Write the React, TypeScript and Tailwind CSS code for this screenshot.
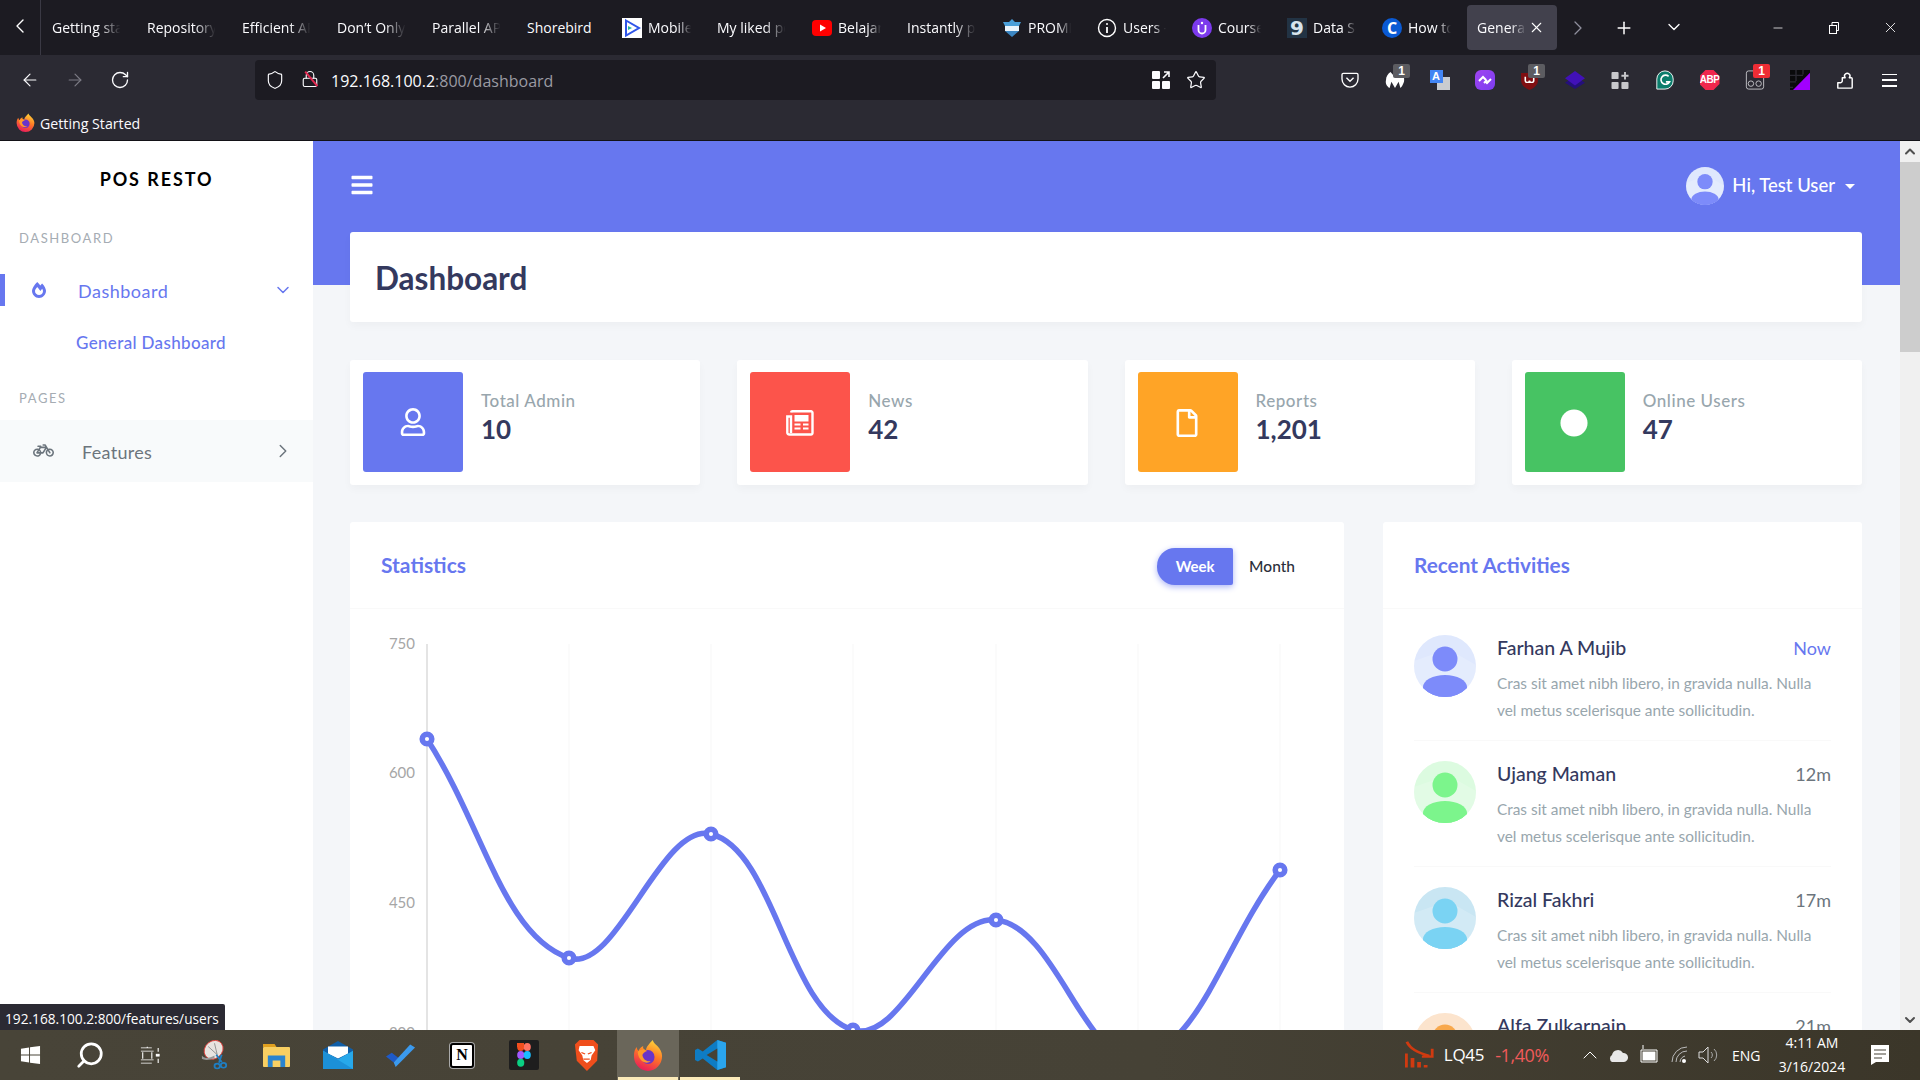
import React from "react";
import { ArrowLeft, ArrowRight, RotateCw, Shield, Lock, Star, ChevronLeft, ChevronRight, ChevronDown, ChevronUp, Plus, X, Minus, Search } from "lucide-react";
import { FaBars, FaBicycle, FaCircle, FaFireAlt, FaRegFile, FaRegUser } from "react-icons/fa";

const P = "#6777ef";

function Fade({ children, className = "", full }: { children: React.ReactNode; className?: string; full?: boolean }) {
  return <span className={"block overflow-hidden whitespace-nowrap " + (full ? "" : "[mask-image:linear-gradient(to_right,#000_68%,transparent_98%)] ") + className}>{children}</span>;
}

function Fav({ kind }: { kind: string }) {
  if (kind === "mobile")
    return <svg width="20" height="20" viewBox="0 0 20 20" className="shrink-0"><rect width="20" height="20" fill="#fff" /><path d="M4 2.500 17 10 4 17.500Z" fill="none" stroke="#2f55e8" strokeWidth="2" /><path d="M6 8l4 2-4 2Z" fill="#22b8a0" /></svg>;
  if (kind === "yt")
    return <svg width="20" height="20" viewBox="0 0 20 20" className="shrink-0"><rect y="2" width="20" height="16" rx="4" fill="#f00" /><path d="M8 6.500 14 10l-6 3.500Z" fill="#fff" /></svg>;
  if (kind === "prom")
    return <svg width="20" height="20" viewBox="0 0 20 20" className="shrink-0"><path d="M10 1l3 3h6l-2 4H3L1 4h6Z" fill="#4a9fd8" /><rect x="3" y="8" width="14" height="5" fill="#eaf4fb" /><path d="M3 13h14l-7 6Z" fill="#3b86c2" /></svg>;
  if (kind === "users")
    return <svg width="20" height="20" viewBox="0 0 20 20" fill="none" stroke="#fff" className="shrink-0"><circle cx="10" cy="10" r="8.500" strokeWidth="1.400" /><path d="M10 9v6" strokeWidth="1.800" /><circle cx="10" cy="6" r="1" fill="#fff" stroke="none" /></svg>;
  if (kind === "course")
    return <svg width="20" height="20" viewBox="0 0 20 20" className="shrink-0"><circle cx="10" cy="10" r="10" fill="#7c3aed" /><path d="M6.500 7v5a3.500 3.500 0 0 0 7 0V7" fill="none" stroke="#fff" strokeWidth="1.800" /><circle cx="10" cy="5" r="1.200" fill="#fff" /></svg>;
  if (kind === "data")
    return <span className="w-5 h-5 shrink-0 bg-[#223344] text-[#d8e4ec] text-[20px] leading-5 font-bold text-center font-['DejaVu_Sans',sans-serif]">9</span>;
  if (kind === "how")
    return <span className="w-5 h-5 shrink-0 rounded-full bg-[#0a5ad4] text-white text-[16px] leading-5 font-bold text-center">C</span>;
  return null;
}

function Tab({ title, fav, full }: { title: string; fav?: string; full?: boolean }) {
  return (
    <div className="w-[95px] shrink-0 h-[45px] flex items-center pl-[10px] pr-[15px] gap-[6px]">
      {fav && <Fav kind={fav} />}
      <Fade full={full} className="flex-1 text-[14px] text-[#fbfbfe]">{title}</Fade>
    </div>
  );
}

function TabBar() {
  const tabs: [string, string?][] = [
    ["Getting started"], ["Repository search"], ["Efficient API"], ["Don’t Only Use"], ["Parallel APIs"], ["Shorebird"],
    ["Mobile App", "mobile"], ["My liked posts"], ["Belajar", "yt"], ["Instantly preview"], ["PROMPT", "prom"], ["Users - list", "users"],
    ["Course list", "course"], ["Data Science", "data"], ["How to use", "how"],
  ];
  return (
    <div className="h-[55px] shrink-0 bg-[#1c1b22] flex items-start text-white">
      <div className="w-[41px] h-[55px] border-r border-[#3a3944] flex items-center justify-center shrink-0">
        <ChevronLeft size={24} strokeWidth={1.4} className="mb-[4px]" />
      </div>
      <div className="flex pt-[5px] ml-px">
        {tabs.map(([t, f]) => <Tab key={t} title={t} fav={f} full={t === "Shorebird"} />)}
        <div className="w-[90px] h-[45px] rounded-[4px] bg-[#42414d] flex items-center pl-[10px] shrink-0">
          <Fade className="w-[50px] text-[14px] text-[#fbfbfe]">General Dashboard</Fade>
          <X size={17} strokeWidth={1.5} className="ml-[1px]" />
        </div>
      </div>
      <div className="flex items-center h-[45px] mt-[5px]">
        <ChevronRight size={24} strokeWidth={1.3} className="ml-[9px] text-[#8f8f9d]" />
        <Plus size={20} strokeWidth={1.8} className="ml-[24px]" />
        <ChevronDown size={20} strokeWidth={1.6} className="ml-[30px] mb-[2px]" />
        <Minus size={14} strokeWidth={1.3} className="ml-[87px]" />
        <svg width="14" height="14" viewBox="0 0 14 14" fill="none" stroke="#fff" className="ml-[42px]"><rect x="2.500" y="4.500" width="7" height="8" /><path d="M5 4.500V1.500h6.500v8H9.500" /></svg>
        <X size={17} strokeWidth={1.2} className="ml-[41px]" />
      </div>
    </div>
  );
}

function Badge({ red }: { red?: boolean }) {
  return <span className={"absolute top-0 left-[21px] w-[17px] h-[14px] rounded-[2px] text-white text-[12px] leading-[14px] font-bold text-center font-['Liberation_Sans',sans-serif] " + (red ? "bg-[#ee2d35]" : "bg-[#5c5c61]")}>1</span>;
}

function Ext({ children, badge, red }: { children?: React.ReactNode; badge?: boolean; red?: boolean }) {
  return (
    <div className="relative w-[45px] h-[32px] flex items-center justify-center shrink-0">
      {children}
      {badge && <Badge red={red} />}
    </div>
  );
}

function Toolbar() {
  return (
    <div className="h-[50px] shrink-0 bg-[#2b2a33] flex items-center text-[#fbfbfe]">
      <div className="w-[255px] flex items-center pl-[20px] gap-[25px] shrink-0">
        <ArrowLeft size={20} strokeWidth={1.4} />
        <ArrowRight size={20} strokeWidth={1.4} className="text-[#7c7b85]" />
        <RotateCw size={20} strokeWidth={1.6} />
      </div>
      <div className="w-[961px] h-[40px] rounded-[4px] bg-[#1c1b22] flex items-center pl-[10px] pr-[9px] shrink-0">
        <Shield size={20} strokeWidth={1.4} />
        <div className="relative ml-[16px] w-[16px] h-[20px]">
          <Lock size={18} strokeWidth={1.5} />
          <span className="absolute left-[1px] top-[8px] w-[19px] h-[1.500px] bg-[#e22850] rotate-[50deg]" />
        </div>
        <span className="ml-[14px] text-[16px] pt-[2px] text-[#fbfbfe]">192.168.100.2<span className="text-[#9a9aa2]">:800/dashboard</span></span>
        <div className="flex-1" />
        <svg width="20" height="20" viewBox="0 0 20 20" fill="#fbfbfe"><rect x="1" y="1" width="8" height="8" rx="1" /><rect x="1" y="11" width="8" height="8" rx="1" /><rect x="11" y="11" width="8" height="8" rx="1" /><path d="M12 8l6-6M13 2h5v5" fill="none" stroke="#fbfbfe" strokeWidth="1.600" /></svg>
        <Star size={20} strokeWidth={1.5} className="ml-[15px] mr-[1px]" />
      </div>
      <div className="flex ml-[111px] items-center">
        <Ext>
          <svg width="18" height="16" viewBox="0 0 20 18" fill="none" stroke="#fff" strokeWidth="1.500"><path d="M2.500 1.500h15a1.500 1.500 0 0 1 1.500 1.500v5a9 9 0 0 1-18 0V3a1.500 1.500 0 0 1 1.500-1.500Z" /><path d="M6 6.500l4 4 4-4" /></svg>
        </Ext>
        <Ext badge>
          <svg width="20" height="18" viewBox="0 0 22 20" fill="#fff"><path d="M6 1 11 7l5-6c4 2 6 6 5 11-1 3-2 5-4 7l-2-7-4 7-4-7-2 7C2 17 0 14 1 10 1 6 3 3 6 1Z" /></svg>
        </Ext>
        <Ext>
          <div className="relative w-[20px] h-[20px]">
            <span className="absolute left-[7px] top-[7px] w-[13px] h-[13px] bg-[#c9ccd0]" />
            <span className="absolute left-0 top-0 w-[13px] h-[13px] bg-[#4285f4] text-white text-[11px] leading-[13px] font-bold text-center font-['Liberation_Sans',sans-serif]">A</span>
          </div>
        </Ext>
        <Ext>
          <svg width="20" height="20" viewBox="0 0 20 20"><defs><linearGradient id="pg" x1="0" y1="0" x2="1" y2="1"><stop offset="0" stopColor="#a044f0" /><stop offset="1" stopColor="#7b3df0" /></linearGradient></defs><rect width="20" height="20" rx="6" fill="url(#pg)" /><path d="M4 11l4-4 3 3M9 13l3 -3M16 9l-4 4-1-1" stroke="#fff" strokeWidth="2" fill="none" /></svg>
        </Ext>
        <Ext badge>
          <svg width="19" height="19" viewBox="0 0 18 20" preserveAspectRatio="none"><path d="M1 2h16v8c0 5-4 8-8 10-4-2-8-5-8-10Z" fill="#800f12" /><path d="M5 6v4a2 2 0 0 0 4 0 2 2 0 0 0 4 0V6" fill="none" stroke="#fff" strokeWidth="1.500" /></svg>
        </Ext>
        <Ext>
          <svg width="22" height="20" viewBox="0 0 22 22" preserveAspectRatio="none"><path d="M1 14l10-7 10 7-10 7Z" fill="#24107a" /><path d="M1 9l10-8 10 8-10 8Z" fill="#4111b8" /></svg>
        </Ext>
        <Ext>
          <svg width="18" height="17" viewBox="0 0 18 18" fill="#c8c8cc"><rect width="7.500" height="7.500" rx="1" /><rect y="10.500" width="7.500" height="7.500" rx="1" /><rect x="10.500" y="10.500" width="7.500" height="7.500" rx="1" /><path d="M13.300 0h2v3h2.700v2h-2.700v3h-2V5H10.500V3h2.800Z" /></svg>
        </Ext>
        <Ext>
          <svg width="20" height="20" viewBox="0 0 20 22"><path d="M10 1a9 9 0 0 1 9 9v2a9 9 0 0 1-9 9H1V10a9 9 0 0 1 9-9Z" fill="#0b7d6c" stroke="#fff" /><path d="M14 7a5 5 0 1 0 1 6h-4" fill="none" stroke="#fff" strokeWidth="1.800" /></svg>
        </Ext>
        <Ext>
          <div className="w-[20px] h-[20px] bg-[#f0274d] [clip-path:polygon(30%_0,70%_0,100%_30%,100%_70%,70%_100%,30%_100%,0_70%,0_30%)] text-white text-[10px] leading-[20px] font-bold text-center tracking-[-0.500px] font-['Liberation_Sans',sans-serif]">ABP</div>
        </Ext>
        <Ext badge red>
          <svg width="20" height="20" viewBox="0 0 20 22" fill="none" stroke="#c8c8cc" strokeWidth="1"><rect x="0.500" y="1" width="19" height="20" rx="2.500" /><circle cx="5.500" cy="15" r="3" /><circle cx="14" cy="15" r="3" /></svg>
        </Ext>
        <Ext>
          <svg width="20" height="20" viewBox="0 0 20 22" preserveAspectRatio="none"><rect width="20" height="22" fill="#0a0a0c" /><path d="M20 3V22H3Z" fill="#a200ff" /><path d="M6 0v12M13 0v5M0 6h13M0 13h6M0 19h3" stroke="#2b2a33" strokeWidth="1.400" /></svg>
        </Ext>
        <Ext>
          <svg width="18" height="20" viewBox="0 0 20 21" fill="none" stroke="#fff" strokeWidth="1.600" strokeLinejoin="round"><path d="M2 19.500v-6h2.500a2.200 2.200 0 0 0 2.500-2V8h3.200a3 3 0 1 1 4.600 0H17a1 1 0 0 1 1 1v9.500a1 1 0 0 1-1 1Z" /></svg>
        </Ext>
        <Ext><div className="w-[15px] h-[13px] flex flex-col justify-between"><span className="h-[1.500px] bg-white" /><span className="h-[1.500px] bg-white" /><span className="h-[1.500px] bg-white" /></div></Ext>
      </div>
    </div>
  );
}

function Bookmarks() {
  return (
    <div className="h-[35px] shrink-0 bg-[#2b2a33] border-b border-[#131217] box-content flex items-center pl-[16px] gap-[5px] text-[14.200px] text-[#fbfbfe]">
      <FirefoxLogo width={19} height={19} />
      <span className="pt-[2px]">Getting Started</span>
    </div>
  );
}

function FirefoxLogo({ width, height }: { width: number; height: number }) {
  return (
    <svg width={width} height={height} viewBox="0 0 32 32" className="shrink-0" preserveAspectRatio="none">
      <defs>
        <linearGradient id="ff" x1="0.700" y1="0" x2="0.300" y2="1"><stop offset="0" stopColor="#ffd53a" /><stop offset="0.450" stopColor="#ff7a25" /><stop offset="1" stopColor="#e8185c" /></linearGradient>
      </defs>
      <path d="M21 1c1 3 3 4 5 6 3 3 5 6 5 10a15 15 0 0 1-30 0c0-4 1-7 3-9 0 2 1 3 2 4 1-3 3-4 5-5-1 2 1 4 3 4 0-3 3-6 7-10Z" fill="url(#ff)" />
      <circle cx="16" cy="18" r="7" fill="#6a35c9" />
      <path d="M5 13c3-3 6-3 10-1-3 1-4 2-5 4 1 5 5 7 9 6-4 4-13 1-14-9Z" fill="#ff9a2b" />
    </svg>
  );
}

function Sidebar() {
  return (
    <aside className="w-[313px] shrink-0 bg-white flex flex-col">
      <div className="h-[76px] flex items-center justify-center text-[18px] font-bold tracking-[1.900px] text-black">POS RESTO</div>
      <div className="h-[40px] mt-[2px] pl-[19px] flex items-center text-[13px] tracking-[1.600px] text-[#a5acb3]">DASHBOARD</div>
      <div className="relative h-[32px] mt-[15px] flex items-center text-[#6777ef]">
        <span className="w-[5px] h-[32px] bg-[#6777ef]" />
        <FaFireAlt size={16} className="ml-[26px]" />
        <span className="ml-[31px] text-[18px] tracking-[0.500px] pt-[3px]">Dashboard</span>
        <ChevronDown size={20} strokeWidth={1.800} className="ml-auto mr-[20px]" />
      </div>
      <div className="h-[40px] mt-[17px] pl-[76px] flex items-center text-[17px] font-medium tracking-[0.350px] text-[#6777ef]">General Dashboard</div>
      <div className="h-[40px] mt-[16px] pl-[19px] flex items-center text-[13px] tracking-[1.600px] text-[#a5acb3]">PAGES</div>
      <div className="h-[62px] mt-[1px] bg-[#f8fafb] flex items-center text-[#6c757d]">
        <FaBicycle size={21} className="ml-[33px] -mt-[2px]" />
        <span className="ml-[28px] text-[18px] tracking-[0.300px] pt-[3px]">Features</span>
        <ChevronRight size={22} strokeWidth={1.600} className="ml-auto mr-[19px] -mt-[1px]" />
      </div>
    </aside>
  );
}

function Stat({ icon, color, label, value }: { icon: React.ReactNode; color: string; label: string; value: string }) {
  return (
    <div className="h-[125px] bg-white rounded-[3px] shadow-[0_4px_8px_rgba(0,0,0,0.03)] flex pl-[13px] pt-[12px]">
      <div className={"w-[100px] h-[100px] rounded-[3px] flex items-center justify-center text-white shrink-0 " + color}>{icon}</div>
      <div className="ml-[18px] pt-[16px]">
        <div className="text-[17px] leading-[26px] font-medium text-[#98a6ad] tracking-[0.550px]">{label}</div>
        <div className="text-[26px] leading-[30px] font-bold text-[#34395e]">{value}</div>
      </div>
    </div>
  );
}

const pts: [number, number][] = [[77, 130], [219, 349], [361, 225], [503, 421], [646, 311], [788, 449], [930, 261]];
function chartPath() {
  const t = 0.4;
  const ctrl = pts.map((p, i) => {
    const a = pts[Math.max(i - 1, 0)], b = pts[Math.min(i + 1, pts.length - 1)];
    const d1 = Math.hypot(p[0] - a[0], p[1] - a[1]), d2 = Math.hypot(b[0] - p[0], b[1] - p[1]);
    const s = d1 + d2 || 1;
    const f1 = (t * d1) / s, f2 = (t * d2) / s;
    return { px: p[0] - f1 * (b[0] - a[0]), py: p[1] - f1 * (b[1] - a[1]), nx: p[0] + f2 * (b[0] - a[0]), ny: p[1] + f2 * (b[1] - a[1]) };
  });
  let d = `M${pts[0][0]} ${pts[0][1]}`;
  for (let i = 1; i < pts.length; i++) d += ` C${ctrl[i - 1].nx} ${ctrl[i - 1].ny} ${ctrl[i].px} ${ctrl[i].py} ${pts[i][0]} ${pts[i][1]}`;
  return d;
}

function Chart() {
  return (
    <svg width="994" height="470" className="block">
      {[219, 361, 503, 646, 788, 930].map(x => <line key={x} x1={x} x2={x} y1="35" y2="470" stroke="#f7f7f7" />)}
      <line x1="77" x2="77" y1="35" y2="470" stroke="#c9c9c9" />
      {[["750", 40], ["600", 169], ["450", 299], ["300", 429]].map(([l, y]) => (
        <text key={l as string} x="65" y={y as number} textAnchor="end" fontSize="15" fill="#a6a6a6" fontFamily="Lato, sans-serif">{l}</text>
      ))}
      <path d={chartPath()} fill="none" stroke={P} strokeWidth="5.500" />
      {pts.map(([x, y]) => <circle key={x} cx={x} cy={y} r="4.800" fill="#fff" stroke={P} strokeWidth="5.500" />)}
    </svg>
  );
}

function Avatar({ bg, fg, size = 62 }: { bg: string; fg: string; size?: number }) {
  const id = "c" + fg.slice(1) + size;
  return (
    <svg width={size} height={size} viewBox="0 0 62 62" className="shrink-0">
      <defs><clipPath id={id}><circle cx="31" cy="31" r="31" /></clipPath></defs>
      <g clipPath={`url(#${id})`}>
        <rect width="62" height="62" fill={bg} />
        <path d="M0 26 34 14 62 30V62H0Z" fill="#fff" opacity="0.180" />
        <circle cx="31" cy="24" r="12.500" fill={fg} />
        <ellipse cx="31" cy="52" rx="22" ry="12" fill={fg} />
        <rect x="9" y="52" width="44" height="10" fill={fg} />
      </g>
    </svg>
  );
}

function Activity({ name, time, bg, fg, now, last }: { name: string; time: string; bg: string; fg: string; now?: boolean; last?: boolean }) {
  return (
    <div className={"flex gap-[21px] pt-[20px] h-[126px] " + (last ? "" : "border-b border-[#f9f9f9]")}>
      <Avatar bg={bg} fg={fg} />
      <div className="flex-1 min-w-0">
        <div className="flex justify-between items-center h-[26px]">
          <span className="text-[19.500px] font-medium text-[#34395e]">{name}</span>
          <span className={"text-[18px] " + (now ? "text-[#6777ef]" : "text-[#6c757d]")}>{time}</span>
        </div>
        <p className="text-[15.400px] leading-[27px] text-[#98a6ad] mt-[9px] whitespace-nowrap">Cras sit amet nibh libero, in gravida nulla. Nulla<br />vel metus scelerisque ante sollicitudin.</p>
      </div>
    </div>
  );
}

function Main() {
  return (
    <main className="flex-1 min-w-0 pl-[37px] pr-[38px] bg-[linear-gradient(#6777ef_144px,#f4f6f9_144px)]">
      <div className="h-[91px] flex items-center justify-between text-white">
        <FaBars size={24} className="-mt-[3px]" color="#fff" />
        <div className="flex items-center pb-[1px]">
          <Avatar bg="#dfe8fd" fg="#7d8bfa" size={38} />
          <span className="ml-[8px] text-[18.500px] font-medium">Hi, Test User</span>
          <span className="ml-[10px] w-0 h-0 border-x-[5px] border-x-transparent border-t-[5px] border-t-white" />
          <span className="w-[7px]" />
        </div>
      </div>
      <div className="h-[90px] bg-white rounded-[3px] shadow-[0_4px_8px_rgba(0,0,0,0.03)] flex items-center px-[25px]">
        <h1 className="text-[31.500px] font-bold text-[#34395e] pt-[3px]">Dashboard</h1>
      </div>
      <div className="grid grid-cols-4 gap-x-[37px] mt-[38px]">
        <Stat color="bg-[#6777ef]" label="Total Admin" value="10" icon={<FaRegUser size={28} />} />
        <Stat color="bg-[#fc544b]" label="News" value="42" icon={
          <svg width="28" height="26" viewBox="0 0 28 26" fill="none" stroke="#fff" strokeWidth="2.400" className="mt-[2px]"><path d="M5 2.500a1.500 1.500 0 0 1 1.500-1.200H25a1.500 1.500 0 0 1 1.500 1.500V23a1.500 1.500 0 0 1-1.500 1.500H3A1.800 1.800 0 0 1 1.300 23V6.500H5V23" /><rect x="8.500" y="5" width="14" height="6.500" fill="#fff" stroke="none" /><path d="M8.500 14.500h6M17 14.500h5.500M8.500 18.500h6M17 18.500h5.500" strokeWidth="2.200" /></svg>
        } />
        <Stat color="bg-[#ffa426]" label="Reports" value="1,201" icon={<FaRegFile size={28} className="mt-[2px] -ml-px" />} />
        <Stat color="bg-[#47c363]" label="Online Users" value="47" icon={<FaCircle size={28} className="mt-[2px] -ml-px" />} />
      </div>
      <div className="flex gap-[39px] mt-[37px] items-start">
        <section className="w-[994px] shrink-0 bg-white rounded-[3px]">
          <div className="h-[87px] border-b border-[#f9f9f9] flex items-center pl-[31px] pr-[49px]">
            <h2 className="text-[21px] font-bold text-[#6777ef]">Statistics</h2>
            <div className="ml-auto flex items-center pt-[2px]">
              <span className="w-[76px] h-[37px] rounded-l-[18px] rounded-r-[2px] bg-[#6777ef] shadow-[0_2px_6px_#acb5f6] text-white text-[15px] font-bold flex items-center justify-center">Week</span>
              <span className="ml-[16px] text-[15.500px] font-medium text-[#2b2f3a] pt-[1px]">Month</span>
            </div>
          </div>
          <Chart />
        </section>
        <section className="flex-1 min-w-0 bg-white rounded-[3px]">
          <div className="h-[87px] border-b border-[#f9f9f9] flex items-center pl-[31px]">
            <h2 className="text-[20.800px] font-bold text-[#6777ef]">Recent Activities</h2>
          </div>
          <div className="pt-[6px] pl-[31px] pr-[31px]">
            <Activity name="Farhan A Mujib" time="Now" now bg="#dfe8fd" fg="#7d8bfa" />
            <Activity name="Ujang Maman" time="12m" bg="#dcfbe0" fg="#7cf58c" />
            <Activity name="Rizal Fakhri" time="17m" bg="#c9e6f3" fg="#7ad3f3" />
            <Activity name="Alfa Zulkarnain" time="21m" bg="#fce4cd" fg="#f8a84c" last />
          </div>
        </section>
      </div>
    </main>
  );
}

function Scrollbar() {
  return (
    <div className="w-[20px] shrink-0 bg-[#f0f0f0] flex flex-col items-center">
      <ChevronUp size={16} strokeWidth={3} className="text-[#505050] h-[21px]" />
      <div className="w-full h-[190px] bg-[#cdcdcd]" />
      <div className="flex-1" />
      <ChevronDown size={16} strokeWidth={3} className="text-[#505050] mb-[2px]" />
    </div>
  );
}

function TaskIcon({ children, active, under, w }: { children: React.ReactNode; active?: boolean; under?: boolean; w?: string }) {
  return (
    <div className={"relative h-[50px] flex items-center justify-center shrink-0 " + (w ?? "w-[62px] ") + (active ? " bg-[#6a665a]" : "")}>
      {children}
      {under && <span className="absolute bottom-0 left-[1px] right-[1px] h-[3px] bg-[#fbeab9]" />}
    </div>
  );
}

function Taskbar() {
  return (
    <div className="h-[50px] shrink-0 bg-[linear-gradient(90deg,#484438,#464236_60%,#3b3629)] flex items-center text-white font-['Open_Sans',sans-serif]">
      <TaskIcon w="w-[60px]">
        <svg width="21" height="20" viewBox="0 0 22 22" fill="#fff" preserveAspectRatio="none"><path d="M1 4l8.500-1.300V10.500H1ZM10.500 2.500 21 1v9.500H10.500ZM1 11.500h8.500v7.800L1 18ZM10.500 11.500H21V21l-10.500-1.500Z" /></svg>
      </TaskIcon>
      <TaskIcon w="w-[60px]"><Search size={30} strokeWidth={2.2} className="-scale-x-100" /></TaskIcon>
      <TaskIcon w="w-[60px]">
        <svg width="20" height="19" viewBox="0 0 22 30" fill="none" stroke="#fff" strokeWidth="1.200" preserveAspectRatio="none"><path d="M1 3h12M1 27h12M8 3V1M1 8h14M1 22h14M3 10v10M13 10v10" /><rect x="18" y="13" width="3" height="3" fill="#fff" /><path d="M20 3v6M20 20v7" /></svg>
      </TaskIcon>
      <span className="w-[3px] shrink-0" />
      <TaskIcon>
        <svg width="27" height="31" viewBox="0 0 30 38" preserveAspectRatio="none"><ellipse cx="14" cy="12" rx="10" ry="12" fill="#e8e4e0" stroke="#e0403c" strokeWidth="1" transform="rotate(30 14 12)" /><path d="M8 8l10 10M15 4l3 14" stroke="#888" strokeWidth="1" /><path d="M1 19c2 4 8 4 14 0v3c-6 3-11 3-14 1Z" fill="#999" /><path d="M17 18l6 9M23 18l-3 10" stroke="#1f7ec2" strokeWidth="2" /><circle cx="18" cy="32" r="3" fill="none" stroke="#1f7ec2" strokeWidth="2" /><circle cx="25" cy="31" r="3" fill="none" stroke="#1f7ec2" strokeWidth="2" /></svg>
      </TaskIcon>
      <TaskIcon>
        <svg width="27" height="23" viewBox="0 0 28 32" preserveAspectRatio="none"><path d="M0 0h12l2 4H0Z" fill="#e0a020" /><rect y="4" width="28" height="28" rx="1" fill="#f8cf62" /><path d="M5 32V16h18v16" fill="#2a84cf" /><rect x="10" y="23" width="8" height="9" fill="#f8cf62" /></svg>
      </TaskIcon>
      <TaskIcon>
        <svg width="30" height="28" viewBox="0 0 30 40" preserveAspectRatio="none"><path d="M15 0 30 12v28H0V12Z" fill="#0f5ea8" /><path d="M5 8h20v10L15 25 5 18Z" fill="#fff" /><path d="M0 14 15 26 30 14v26H0Z" fill="#27a8ea" /><path d="M0 14 30 40H0Z" fill="#1c90d8" /></svg>
      </TaskIcon>
      <TaskIcon>
        <svg width="31" height="24" viewBox="0 0 32 32" preserveAspectRatio="none"><path d="M1 18l6-5 7 7-5 6Z" fill="#1e5ac8" /><path d="M9 26 26 2l5 4-20 26Z" fill="#3b9aee" /></svg>
      </TaskIcon>
      <TaskIcon>
        <div className="w-[24px] h-[25px] bg-white border-2 border-black rounded-[3px] text-black text-[16px] leading-[20px] font-bold text-center font-['Liberation_Serif',serif] shadow-[0_0_0_1px_#aaa]">N</div>
      </TaskIcon>
      <TaskIcon>
        <div className="w-[30px] h-[30px] bg-[#1e1e1e] rounded-[2px] flex items-center justify-center">
          <svg width="14" height="24" viewBox="0 0 15 23" preserveAspectRatio="none"><circle cx="4" cy="3.800" r="3.800" fill="#f24e1e" /><circle cx="11" cy="3.800" r="3.800" fill="#ff7262" /><rect x="0" y="0" width="7.500" height="4" fill="#f24e1e" /><circle cx="4" cy="11.500" r="3.800" fill="#a259ff" /><circle cx="11" cy="11.500" r="3.800" fill="#1abcfe" /><circle cx="4" cy="19" r="3.800" fill="#0acf83" /></svg>
        </div>
      </TaskIcon>
      <TaskIcon>
        <svg width="25" height="31" viewBox="0 0 27 42" preserveAspectRatio="none"><path d="M6 0h15l5 6-1 22-11 14L3 28 1 6Z" fill="#f04e1c" /><path d="M6 8h15l2 6-4 7-1 6-4 4-4-4-1-6-4-7Z" fill="#fff" /><path d="M8 17l4 2M15 19l4-2M10 26h7" stroke="#f04e1c" strokeWidth="1.600" /></svg>
      </TaskIcon>
      <TaskIcon active under><FirefoxLogo width={30} height={32} /></TaskIcon>
      <TaskIcon under>
        <svg width="31" height="30" viewBox="0 0 32 42" preserveAspectRatio="none"><path d="M23 0l9 4v34l-9 4L8 26l-5 4-3-2V14l3-2 5 4Z" fill="#0e7cc4" /><path d="M23 0l9 4v34l-9 4Z" fill="#2aa5ee" /><path d="M23 12 12 21l11 9Z" fill="#464236" /></svg>
      </TaskIcon>
      <div className="flex-1" />
      <svg width="30" height="28" viewBox="0 0 32 36" className="mr-[9px]" preserveAspectRatio="none"><path d="M1 16v18M8 22v12M15 27v7M22 31v3" stroke="#d03a10" strokeWidth="4" /><path d="M2 1c3 8 10 14 24 18M29 10v10H18" stroke="#d03a10" strokeWidth="3" fill="none" /></svg>
      <span className="text-[17px] tracking-[-0.300px]">LQ45</span>
      <span className="ml-[11px] text-[18px] text-[#f05a5a] tracking-[-0.400px]">-1,40%</span>
      <ChevronUp size={24} strokeWidth={1} className="ml-[29px]" />
      <svg width="20" height="16" viewBox="0 0 20 16" className="ml-[6px]" fill="#e8e8e8"><path d="M4 15a4 4 0 0 1 0-7 6 6 0 0 1 11-2 4.500 4.500 0 0 1 1 9Z" /></svg>
      <svg width="20" height="20" viewBox="0 0 20 20" className="ml-[11px]" fill="none" stroke="#fff"><path d="M2 5h16v12H2Z" /><rect x="4" y="7" width="12" height="8" fill="#fff" /><path d="M4 4V0" /></svg>
      <svg width="18" height="18" viewBox="0 0 18 18" className="ml-[12px]" fill="none" stroke="#bbb"><path d="M1 16A15 15 0 0 1 16 1M5 16A11 11 0 0 1 16 5M9 16a7 7 0 0 1 5-6" /><circle cx="13" cy="15" r="2" fill="#fff" stroke="none" /></svg>
      <svg width="22" height="20" viewBox="0 0 22 20" className="ml-[9px]" fill="none" stroke="#ddd"><path d="M1 7h4l5-5v16l-5-5H1Z" /><path d="M13 7a4 4 0 0 1 0 6M16 4a8 8 0 0 1 0 12" stroke="#aaa" /></svg>
      <span className="ml-[12px] text-[14px] w-[30px]">ENG</span>
      <div className="ml-[14px] w-[72px] flex flex-col items-center text-[14px] leading-[24px]"><span>4:11 AM</span><span>3/16/2024</span></div>
      <div className="ml-[22px] mr-[30px]">
        <svg width="20" height="20" viewBox="0 0 20 20"><path d="M1 0h18v17H6l-5 3Z" fill="#fff" /><path d="M4 5h12M4 9h12M4 13h8" stroke="#464236" strokeWidth="1.200" /></svg>
      </div>
    </div>
  );
}

export default function App() {
  return (
    <div className="w-[1920px] h-[1080px] flex flex-col overflow-hidden bg-white font-['Open_Sans',sans-serif]">
      <TabBar />
      <Toolbar />
      <Bookmarks />
      <div className="relative flex-1 min-h-0 flex overflow-hidden font-['Lato',sans-serif]">
        <Sidebar />
        <Main />
        <Scrollbar />
        <div className="absolute left-0 bottom-0 w-[225px] h-[26px] bg-[#2b2a33] rounded-tr-[2px] text-white text-[13.700px] leading-[29px] pl-[5px] font-['Open_Sans',sans-serif] whitespace-nowrap">192.168.100.2:800/features/users</div>
      </div>
      <Taskbar />
    </div>
  );
}
